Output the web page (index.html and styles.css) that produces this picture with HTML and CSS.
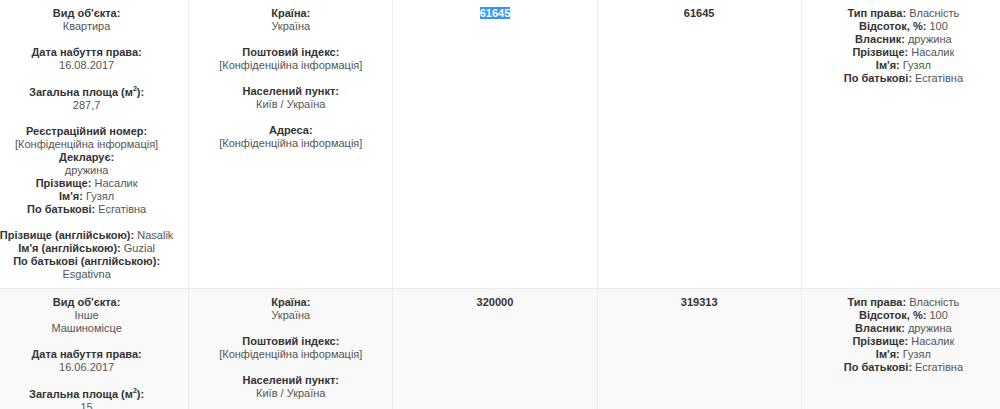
FILE: index.html
```html
<!DOCTYPE html>
<html lang="uk">
<head>
<meta charset="utf-8">
<title>Декларація</title>
<link rel="stylesheet" href="styles.css">
</head>
<body>
<div class="wrap">
<table class="decl">
  <tr>
    <td>
      <div class="grp"><b>Вид об'єкта:</b><br>Квартира</div>
      <div class="grp"><b>Дата набуття права:</b><br>16.08.2017</div>
      <div class="grp"><b>Загальна площа (м<sup>2</sup>):</b><br>287,7</div>
      <div class="grp"><b>Реєстраційний номер:</b><br>[Конфіденційна інформація]<br><b>Декларує:</b><br>дружина<br><b>Прізвище:</b> Насалик<br><b>Ім'я:</b> Гузял<br><b>По батькові:</b> Есгатівна</div>
      <div class="grp last"><b>Прізвище (англійською):</b> Nasalik<br><b>Ім'я (англійською):</b> Guzial<br><b>По батькові (англійською):</b><br>Esgativna</div>
    </td>
    <td>
      <div class="grp"><b>Країна:</b><br>Україна</div>
      <div class="grp"><b>Поштовий індекс:</b><br>[Конфіденційна інформація]</div>
      <div class="grp"><b>Населений пункт:</b><br>Київ / Україна</div>
      <div class="grp last"><b>Адреса:</b><br>[Конфіденційна інформація]</div>
    </td>
    <td><b><span class="sel">61645</span></b></td>
    <td><b>61645</b></td>
    <td>
      <b>Тип права:</b> Власність<br><b>Відсоток, %:</b> 100<br><b>Власник:</b> дружина<br><b>Прізвище:</b> Насалик<br><b>Ім'я:</b> Гузял<br><b>По батькові:</b> Есгатівна
    </td>
  </tr>
  <tr class="alt">
    <td>
      <div class="grp"><b>Вид об'єкта:</b><br>Інше<br>Машиномісце</div>
      <div class="grp"><b>Дата набуття права:</b><br>16.06.2017</div>
      <div class="grp"><b>Загальна площа (м<sup>2</sup>):</b><br>15</div>
      <div class="grp"><b>Реєстраційний номер:</b><br>[Конфіденційна інформація]<br><b>Декларує:</b><br>дружина<br><b>Прізвище:</b> Насалик<br><b>Ім'я:</b> Гузял<br><b>По батькові:</b> Есгатівна</div>
    </td>
    <td>
      <div class="grp"><b>Країна:</b><br>Україна</div>
      <div class="grp"><b>Поштовий індекс:</b><br>[Конфіденційна інформація]</div>
      <div class="grp"><b>Населений пункт:</b><br>Київ / Україна</div>
      <div class="grp last"><b>Адреса:</b><br>[Конфіденційна інформація]</div>
    </td>
    <td><b>320000</b></td>
    <td><b>319313</b></td>
    <td>
      <b>Тип права:</b> Власність<br><b>Відсоток, %:</b> 100<br><b>Власник:</b> дружина<br><b>Прізвище:</b> Насалик<br><b>Ім'я:</b> Гузял<br><b>По батькові:</b> Есгатівна
    </td>
  </tr>
</table>
</div>
</body>
</html>
```

FILE: styles.css
```css
html, body {
  margin: 0;
  padding: 0;
  background: #fff;
  overflow: hidden;
}
body {
  font-family: "Liberation Sans", Arial, sans-serif;
  font-size: 11px;
  line-height: 13px;
  color: #555;
}
.wrap {
  width: 1000px;
  overflow: hidden;
}
.decl {
  border-collapse: collapse;
  table-layout: fixed;
  width: 1022px;
  margin-left: -16px;
  margin-top: -1px;
}
.decl td {
  width: 20%;
  padding: 7px 8px 7px;
  vertical-align: top;
  text-align: center;
  border: 1px solid #ececec;
}
.decl tr.alt td {
  background: #f9f9f9;
}
.decl b {
  color: #333;
  font-weight: bold;
}
.grp {
  margin-bottom: 13px;
}
.grp.last {
  margin-bottom: 0;
}
sup {
  font-size: 7px;
  line-height: 7px;
  vertical-align: 5px;
}
.sel {
  background: #3297fd;
  color: #fff;
}
```
